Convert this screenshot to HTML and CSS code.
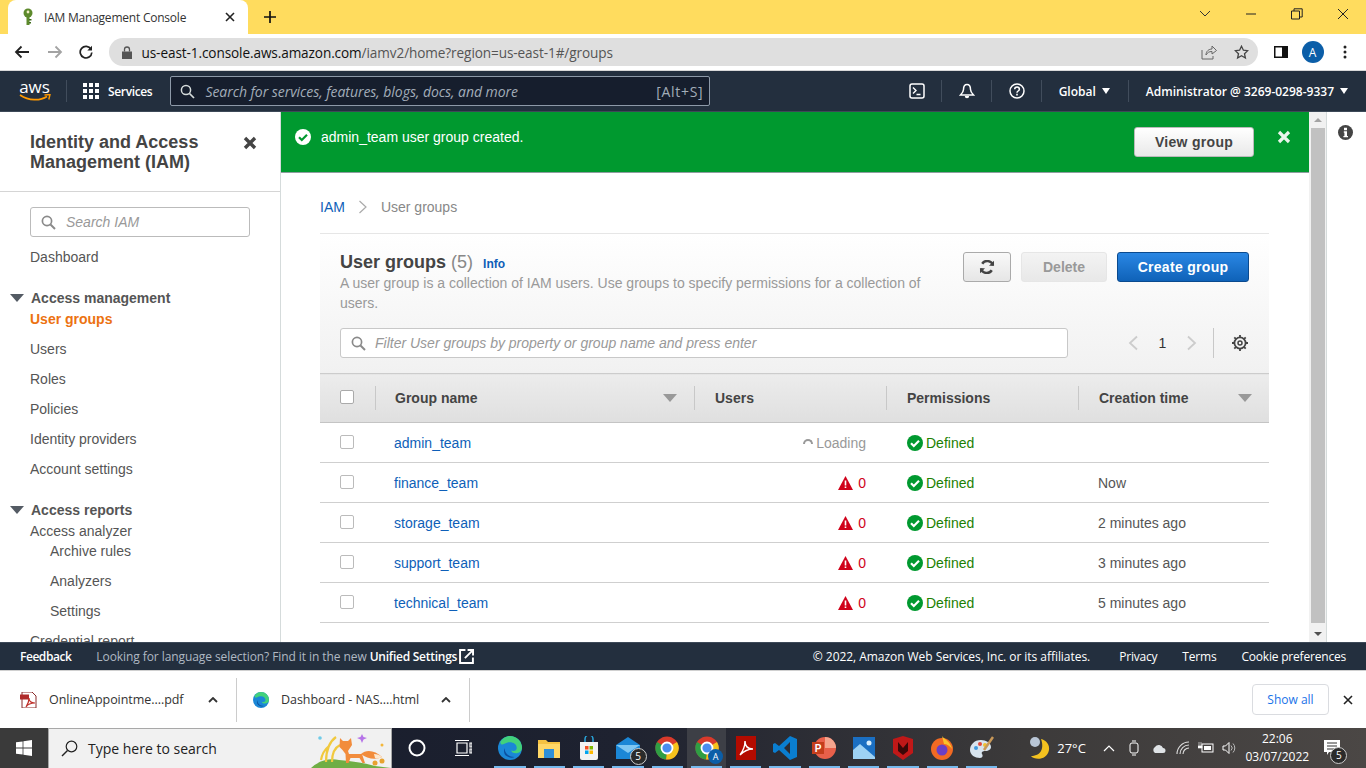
FILE: index.html
```html
<!DOCTYPE html>
<html lang="en">
<head>
  <meta charset="UTF-8">
  <title>IAM Management Console</title>
  <link rel="stylesheet" href="styles.css">
</head>
<body>

  <!-- browser chrome -->
  <div class="tabstrip">
    <div class="tab">
      <svg class="tab-icon" width="16" height="18" viewBox="0 0 16 18"><circle cx="8" cy="5" r="4.5" fill="#5d8a2c"/><circle cx="8" cy="4" r="1.4" fill="#f4f0c8"/><path d="M6.5 8h3v9h-3z" fill="#5d8a2c"/><path d="M9 11h2.5v1.6H9zM9 14h2v1.6H9z" fill="#3f6a1c"/></svg>
      <span class="tab-title">IAM Management Console</span>
      <svg class="tab-close" width="10" height="10" viewBox="0 0 10 10"><path d="M1 1l8 8M9 1l-8 8" stroke="#222" stroke-width="1.6"/></svg>
    </div>
    <svg class="new-tab" width="14" height="14" viewBox="0 0 14 14"><path d="M7 1v12M1 7h12" stroke="#111" stroke-width="1.7"/></svg>
    <div class="window-btns">
      <svg width="12" height="8" viewBox="0 0 12 8"><path d="M1 1l5 5 5-5" fill="none" stroke="#333"/></svg>
      <svg width="12" height="2" viewBox="0 0 12 2"><path d="M1 1h10" stroke="#222"/></svg>
      <svg width="12" height="12" viewBox="0 0 12 12"><path d="M.5 3h8v8h-8zM3 3V.8h8.2V9H8.500" fill="none" stroke="#222"/></svg>
      <svg width="12" height="12" viewBox="0 0 12 12"><path d="M1 1l10 10M11 1L1 11" stroke="#222"/></svg>
    </div>
  </div>

  <div class="toolbar">
    <svg class="tool-btn" width="16" height="14" viewBox="0 0 16 14"><path d="M15 7H2M7.500 1.500L2 7l5.500 5.500" fill="none" stroke="#222" stroke-width="1.800"/></svg>
    <svg class="tool-btn" width="16" height="14" viewBox="0 0 16 14"><path d="M1 7h13M8.500 1.500L14 7l-5.500 5.500" fill="none" stroke="#a3a3a3" stroke-width="1.800"/></svg>
    <svg class="tool-btn" width="14" height="14" viewBox="0 0 14 14"><path d="M12 4.200A5.800 5.800 0 1 0 12.800 7.500" fill="none" stroke="#222" stroke-width="1.700"/><path d="M13 .8v4.700H8.300z" fill="#222"/></svg>
    <div class="omnibox">
      <svg width="10" height="13" viewBox="0 0 10 13"><path d="M0 5.500h10V13H0z" fill="#555"/><path d="M2.500 5.500V3.500a2.500 2.500 0 0 1 5 0v2" fill="none" stroke="#555" stroke-width="1.300"/></svg>
      <span class="url"><span class="url-host">us-east-1.console.aws.amazon.com</span>/iamv2/home?region=us-east-1#/groups</span>
      <svg class="omni-share" width="16" height="15" viewBox="0 0 16 15"><path d="M1 5v9h11v-3M5 10c0-4 3-6 6-6V1l4.500 4.500L11 9V6.500c-3 0-4.500 1-6 3.500z" fill="none" stroke="#666"/></svg>
      <svg class="omni-star" width="15" height="15" viewBox="0 0 15 15"><path d="M7.500 1.200l1.900 4 4.300.5-3.200 3 .9 4.300-3.900-2.200L3.600 13l.9-4.300-3.200-3 4.300-.5z" fill="none" stroke="#444" stroke-width="1.300"/></svg>
    </div>
    <svg class="panel-btn" width="14" height="12" viewBox="0 0 14 12"><path d="M0 0h14v12H0z" fill="#111"/><path d="M1.500 1.500h6.500v9H1.500z" fill="#fff"/></svg>
    <span class="avatar">A</span>
    <svg class="menu-btn" width="4" height="14" viewBox="0 0 4 14"><circle cx="2" cy="2" r="1.500" fill="#222"/><circle cx="2" cy="7" r="1.500" fill="#222"/><circle cx="2" cy="12" r="1.500" fill="#222"/></svg>
  </div>

  <!-- aws console nav -->
  <nav class="aws-nav">
    <div class="aws-logo">
      <span class="aws-word">aws</span>
      <svg width="32" height="8" viewBox="0 0 32 8"><path d="M1 1c9 6 20 6 27 1.500" fill="none" stroke="#f90" stroke-width="1.700"/><path d="M25.500 1l5.500-.5-1.200 5" fill="none" stroke="#f90" stroke-width="1.400"/></svg>
    </div>
    <span class="nav-sep"></span>
    <span class="services-grid"><i></i><i></i><i></i><i></i><i></i><i></i><i></i><i></i><i></i></span>
    <span class="services-label">Services</span>
    <div class="nav-search">
      <svg width="15" height="15" viewBox="0 0 15 15"><circle cx="6" cy="6" r="4.600" fill="none" stroke="#d5dbdb" stroke-width="1.500"/><path d="M9.500 9.500l4.500 4.500" stroke="#d5dbdb" stroke-width="1.700"/></svg>
      <span class="nav-search-text">Search for services, features, blogs, docs, and more</span>
      <span class="nav-search-key">[Alt+S]</span>
    </div>
    <div class="nav-right">
      <svg class="nav-icon" width="16" height="16" viewBox="0 0 16 16"><rect x="1" y="1" width="14" height="14" rx="2" fill="none" stroke="#fff" stroke-width="1.500"/><path d="M4 4.500L7 7.500 4 10.500M7.500 11.500H11.500" fill="none" stroke="#fff" stroke-width="1.400"/></svg>
      <span class="nav-sep"></span>
      <svg class="nav-icon" width="16" height="16" viewBox="0 0 16 16"><path d="M8 1.500c-3 0-3.500 3-3.500 5 0 2-2.500 5-3 5.500h13c-.5-.5-3-3.500-3-5.500 0-2-.5-5-3.500-5z" fill="none" stroke="#fff" stroke-width="1.500"/><path d="M5.800 13a2.200 2.200 0 0 0 4.400 0" fill="#fff"/></svg>
      <span class="nav-sep"></span>
      <svg class="nav-icon" width="16" height="16" viewBox="0 0 16 16"><circle cx="8" cy="8" r="7" fill="none" stroke="#fff" stroke-width="1.500"/><path d="M5.700 6.200c0-3 4.700-3 4.700 0 0 1.800-2.400 1.800-2.400 3.500" fill="none" stroke="#fff" stroke-width="1.500"/><path d="M7.200 10.800h1.600v1.600H7.200z" fill="#fff"/></svg>
      <span class="nav-sep"></span>
      <span class="nav-menu nav-global">Global</span><span class="caret"></span>
      <span class="nav-sep"></span>
      <span class="nav-menu">Administrator @ 3269-0298-9337</span><span class="caret"></span>
    </div>
  </nav>

  <div class="console-body">
    <aside class="sidebar">
      <div class="side-head">
        <h2>Identity and Access Management (IAM)</h2>
        <svg class="side-close" width="14" height="14" viewBox="0 0 14 14"><path d="M2 2l10 10M12 2L2 12" stroke="#444" stroke-width="3.400"/></svg>
      </div>
      <div class="side-search">
        <svg class="search-glass" width="15" height="15" viewBox="0 0 15 15"><circle cx="6" cy="6" r="4.600" fill="none" stroke="#8a8a8a" stroke-width="1.700"/><path d="M9.500 9.500l4.500 4.500" stroke="#8a8a8a" stroke-width="2"/></svg>
        <span>Search IAM</span>
      </div>
      <a class="side-link side-dash">Dashboard</a>
      <div class="side-section"><span class="side-tri"></span>Access management</div>
      <a class="side-link side-active">User groups</a>
      <a class="side-link">Users</a>
      <a class="side-link">Roles</a>
      <a class="side-link">Policies</a>
      <a class="side-link">Identity providers</a>
      <a class="side-link">Account settings</a>
      <div class="side-section"><span class="side-tri"></span>Access reports</div>
      <a class="side-link side-sub-head">Access analyzer</a>
      <a class="side-link side-sub side-sub-first">Archive rules</a>
      <a class="side-link side-sub">Analyzers</a>
      <a class="side-link side-sub">Settings</a>
      <a class="side-link">Credential report</a>
    </aside>

    <main class="content">
      <div class="flash">
        <svg width="16" height="16" viewBox="0 0 16 16"><circle cx="8" cy="8" r="8" fill="#fff"/><path d="M4 8.200l2.800 2.800L12 5.800" fill="none" stroke="#00992f" stroke-width="2.200"/></svg>
        <span class="flash-text">admin_team user group created.</span>
        <button class="btn-view">View group</button>
        <svg class="flash-close" width="14" height="14" viewBox="0 0 14 14"><path d="M2 2l10 10M12 2L2 12" stroke="#e9f5ec" stroke-width="3.200"/></svg>
      </div>

      <div class="crumbs">
        <a class="crumb-link">IAM</a>
        <svg width="10" height="14" viewBox="0 0 10 14"><path d="M1.500 1l6.500 6-6.500 6" fill="none" stroke="#aaa" stroke-width="1.200"/></svg>
        <span>User groups</span>
      </div>

      <section class="panel">
        <div class="panel-head">
          <div class="panel-top">
            <div class="panel-titles">
              <h1>User groups <span class="count">(5)</span> <a class="info">Info</a></h1>
              <p>A user group is a collection of IAM users. Use groups to specify permissions for a collection of users.</p>
            </div>
            <div class="panel-btns">
              <button class="btn btn-refresh"><svg width="16" height="14" viewBox="0 0 16 14"><path d="M14 5.500A6 6 0 0 0 3.200 3.700M2 8.500a6 6 0 0 0 10.800 1.800" fill="none" stroke="#444" stroke-width="2.500"/><path d="M15 .8v5H10zM1 13.200v-5h5z" fill="#444"/></svg></button>
              <button class="btn btn-delete">Delete</button>
              <button class="btn btn-create">Create group</button>
            </div>
          </div>
          <div class="filter-row">
            <div class="filter">
              <svg class="search-glass" width="15" height="15" viewBox="0 0 15 15"><circle cx="6" cy="6" r="4.600" fill="none" stroke="#8a8a8a" stroke-width="1.700"/><path d="M9.500 9.500l4.500 4.500" stroke="#8a8a8a" stroke-width="2"/></svg>
              <span>Filter User groups by property or group name and press enter</span>
            </div>
            <div class="pager">
              <svg width="12" height="16" viewBox="0 0 12 16"><path d="M10 1.500L3 8l7 6.500" fill="none" stroke="#ccc" stroke-width="1.800"/></svg>
              <span class="pager-num">1</span>
              <svg width="12" height="16" viewBox="0 0 12 16"><path d="M2 1.500L9 8l-7 6.500" fill="none" stroke="#ccc" stroke-width="1.800"/></svg>
              <span class="pager-sep"></span>
              <svg class="gear" width="16" height="16" viewBox="0 0 16 16"><circle cx="8" cy="8" r="5.600" fill="none" stroke="#444" stroke-width="1.800"/><circle cx="8" cy="8" r="2" fill="none" stroke="#444" stroke-width="1.500"/><path d="M8 0v2.500M8 13.500V16M0 8h2.500M13.500 8H16M2.300 2.300l1.800 1.800M11.900 11.900l1.800 1.800M2.300 13.700l1.800-1.800M11.900 4.100l1.800-1.800" stroke="#444" stroke-width="1.800"/></svg>
            </div>
          </div>
        </div>

        <table class="groups">
          <thead>
            <tr>
              <th class="col-check"><span class="check check-head"></span></th>
              <th class="col-name"><div class="th-inner">Group name<span class="sort"></span></div></th>
              <th class="col-users"><div class="th-inner">Users</div></th>
              <th class="col-perm"><div class="th-inner">Permissions</div></th>
              <th class="col-time"><div class="th-inner">Creation time<span class="sort"></span></div></th>
            </tr>
          </thead>
          <tbody>
            <tr>
              <td><span class="check"></span></td>
              <td><a class="group-link">admin_team</a></td>
              <td class="users-cell"><span class="spinner"></span><span class="loading">Loading</span></td>
              <td class="perm-cell"><svg class="ok" width="16" height="16" viewBox="0 0 16 16"><circle cx="8" cy="8" r="8" fill="#00992f"/><path d="M4 8.200l2.800 2.800L12 5.800" fill="none" stroke="#fff" stroke-width="2.200"/></svg><span class="defined">Defined</span></td>
              <td></td>
            </tr>
            <tr>
              <td><span class="check"></span></td>
              <td><a class="group-link">finance_team</a></td>
              <td class="users-cell"><svg class="warn" width="15" height="14" viewBox="0 0 15 14"><path d="M7.500 0L15 14H0z" fill="#d0021b"/><path d="M6.700 4.500h1.600v5H6.700zM6.700 10.500h1.600V12H6.700z" fill="#fff"/></svg><span class="zero">0</span></td>
              <td class="perm-cell"><svg class="ok" width="16" height="16" viewBox="0 0 16 16"><circle cx="8" cy="8" r="8" fill="#00992f"/><path d="M4 8.200l2.800 2.800L12 5.800" fill="none" stroke="#fff" stroke-width="2.200"/></svg><span class="defined">Defined</span></td>
              <td>Now</td>
            </tr>
            <tr>
              <td><span class="check"></span></td>
              <td><a class="group-link">storage_team</a></td>
              <td class="users-cell"><svg class="warn" width="15" height="14" viewBox="0 0 15 14"><path d="M7.500 0L15 14H0z" fill="#d0021b"/><path d="M6.700 4.500h1.600v5H6.700zM6.700 10.500h1.600V12H6.700z" fill="#fff"/></svg><span class="zero">0</span></td>
              <td class="perm-cell"><svg class="ok" width="16" height="16" viewBox="0 0 16 16"><circle cx="8" cy="8" r="8" fill="#00992f"/><path d="M4 8.200l2.800 2.800L12 5.800" fill="none" stroke="#fff" stroke-width="2.200"/></svg><span class="defined">Defined</span></td>
              <td>2 minutes ago</td>
            </tr>
            <tr>
              <td><span class="check"></span></td>
              <td><a class="group-link">support_team</a></td>
              <td class="users-cell"><svg class="warn" width="15" height="14" viewBox="0 0 15 14"><path d="M7.500 0L15 14H0z" fill="#d0021b"/><path d="M6.700 4.500h1.600v5H6.700zM6.700 10.500h1.600V12H6.700z" fill="#fff"/></svg><span class="zero">0</span></td>
              <td class="perm-cell"><svg class="ok" width="16" height="16" viewBox="0 0 16 16"><circle cx="8" cy="8" r="8" fill="#00992f"/><path d="M4 8.200l2.800 2.800L12 5.800" fill="none" stroke="#fff" stroke-width="2.200"/></svg><span class="defined">Defined</span></td>
              <td>3 minutes ago</td>
            </tr>
            <tr>
              <td><span class="check"></span></td>
              <td><a class="group-link">technical_team</a></td>
              <td class="users-cell"><svg class="warn" width="15" height="14" viewBox="0 0 15 14"><path d="M7.500 0L15 14H0z" fill="#d0021b"/><path d="M6.700 4.500h1.600v5H6.700zM6.700 10.500h1.600V12H6.700z" fill="#fff"/></svg><span class="zero">0</span></td>
              <td class="perm-cell"><svg class="ok" width="16" height="16" viewBox="0 0 16 16"><circle cx="8" cy="8" r="8" fill="#00992f"/><path d="M4 8.200l2.800 2.800L12 5.800" fill="none" stroke="#fff" stroke-width="2.200"/></svg><span class="defined">Defined</span></td>
              <td>5 minutes ago</td>
            </tr>
          </tbody>
        </table>
      </section>
    </main>

    <div class="scrollbar">
      <span class="scroll-up"></span>
      <span class="scroll-thumb"></span>
      <span class="scroll-down"></span>
    </div>

    <div class="right-rail">
      <svg width="15" height="15" viewBox="0 0 15 15"><circle cx="7.500" cy="7.500" r="7.500" fill="#444"/><path d="M6 2.800h3v2.400H6zM5.800 6.300h3.200v4.600h1v1.400H5.400v-1.400h1V7.700h-.6z" fill="#fff"/></svg>
    </div>
  </div>

  <footer class="aws-footer">
    <span class="foot-feedback">Feedback</span>
    <span class="foot-lang">Looking for language selection? Find it in the new</span>
    <span class="foot-unified">Unified Settings</span>
    <svg width="15" height="15" viewBox="0 0 14 14"><path d="M6 1H1v12h12V8" fill="none" stroke="#fff" stroke-width="1.800"/><path d="M5.500 8.500L13 1M8 .9h5.100V6" fill="none" stroke="#fff" stroke-width="1.800"/></svg>
    <div class="foot-right">
      <span class="foot-copy">© 2022, Amazon Web Services, Inc. or its affiliates.</span>
      <span>Privacy</span>
      <span>Terms</span>
      <span>Cookie preferences</span>
    </div>
  </footer>

  <!-- downloads shelf -->
  <div class="downloads">
    <div class="dl-item dl-pdf">
      <svg width="17" height="16" viewBox="0 0 17 16"><path d="M2 0h10l4 4v12H2z" fill="#fff" stroke="#8a2a2a"/><path d="M0 2.500h9v5H0z" fill="#b02a2a"/><path d="M6 15c2-3 3-7 3-9 0 3 2 5 6 5-3 0-7 1-9 4z" fill="none" stroke="#c0302a" stroke-width="1.200"/></svg>
      <span class="dl-name">OnlineAppointme....pdf</span>
      <svg class="dl-caret" width="10" height="6" viewBox="0 0 10 6"><path d="M1 5l4-4 4 4" fill="none" stroke="#333" stroke-width="1.800"/></svg>
    </div>
    <div class="dl-item dl-html">
      <svg width="16" height="16" viewBox="0 0 16 16"><circle cx="8" cy="8" r="8" fill="#1b87d6"/><path d="M8 0a8 8 0 0 1 8 8c0 2-2 3.500-4 3.500-2 0-3-.8-3.200-1.800 2 .8 3.700 0 3.700-1.700C12.500 5 9 3.500 6 4.500 4 5.200 2 7 1.500 4 3 1.500 5.500 0 8 0z" fill="#42d17b"/><path d="M6 13.500c-2-1-2.500-3.500-1.500-5.500-.3 3 2 6 6.500 6-1.500.8-3.400.5-5-.5z" fill="#0b4f9e"/></svg>
      <span class="dl-name">Dashboard - NAS....html</span>
      <svg class="dl-caret" width="10" height="6" viewBox="0 0 10 6"><path d="M1 5l4-4 4 4" fill="none" stroke="#333" stroke-width="1.800"/></svg>
    </div>
    <div class="dl-right">
      <button class="show-all">Show all</button>
      <svg width="10" height="10" viewBox="0 0 10 10"><path d="M1 1l8 8M9 1L1 9" stroke="#222" stroke-width="1.600"/></svg>
    </div>
  </div>

  <!-- windows taskbar -->
  <div class="taskbar">
    <div class="start">
      <svg width="16" height="16" viewBox="0 0 16 16"><path d="M0 2.300l6.600-.9v6.200H0zM7.400 1.300L16 0v7.600H7.400zM0 8.400h6.600v6.200L0 13.700zM7.400 8.400H16V16l-8.600-1.300z" fill="#fff"/></svg>
    </div>
    <div class="win-search">
      <svg width="17" height="17" viewBox="0 0 17 17"><circle cx="10.500" cy="6.500" r="5.300" fill="none" stroke="#222" stroke-width="1.200"/><path d="M6.500 10.500L1 16" stroke="#222" stroke-width="1.500"/></svg>
      <span class="win-search-text">Type here to search</span>
      <svg class="fox" width="80" height="40" viewBox="0 0 80 40">
        <path d="M0 40Q12 29 28 32Q50 34 64 38L80 40z" fill="#6fae45"/>
        <path d="M15 34C15 22 18 14 25 9M21 34C21 26 23 20 29 17M10 32C11 26 13 22 18 18" fill="none" stroke="#f1c93e" stroke-width="2.200"/>
        <circle cx="9" cy="10" r="1.800" fill="#6fcbe8"/>
        <path d="M29 10l3 3h5l3-3 1 7-4 6 1 3h13l3 9h-2.500l-3-5h-9l-2 5H35l-.5-9-3-4-3-3z" fill="#f28c3c"/>
        <path d="M50 26c5-5 14-4 21 3-6 3-15 2-21-3z" fill="#f28c3c"/>
        <path d="M63 26c3 0 6 1 8 3-2 1-5 2-7 1z" fill="#fde8cf"/>
        <path d="M51 6l1.500 3 3.500 1-3.500 1.500L51 15l-1.500-3.500-3.500-1.500 3.500-1z" fill="#b674e8"/>
        <circle cx="71" cy="17" r="1.500" fill="#f4b73a"/>
        <circle cx="64" cy="35" r="2.500" fill="#e8a22f"/>
        <circle cx="71" cy="33" r="2.500" fill="#e8a22f"/>
      </svg>
    </div>
    <div class="task-apps">
      <span class="task-app task-wide"><svg width="18" height="18" viewBox="0 0 18 18"><circle cx="9" cy="9" r="7.500" fill="none" stroke="#fff" stroke-width="2"/></svg></span>
      <span class="task-app task-wide"><svg width="18" height="16" viewBox="0 0 18 16"><path d="M3 3h10v10H3zM1 .5h14M1 15.500h14M16 3h2v4h-2zM16 9h2v4h-2z" fill="none" stroke="#fff" stroke-width="1.200"/></svg></span>
      <span class="task-app task-first"><svg width="24" height="24" viewBox="0 0 16 16"><circle cx="8" cy="8" r="8" fill="#1b87d6"/><path d="M8 0a8 8 0 0 1 8 8c0 2-2 3.500-4 3.500-2 0-3-.8-3.200-1.800 2 .8 3.700 0 3.700-1.700C12.500 5 9 3.500 6 4.500 4 5.200 2 7 1.500 4 3 1.500 5.500 0 8 0z" fill="#42d17b"/><path d="M6 13.500c-2-1-2.500-3.500-1.500-5.500-.3 3 2 6 6.500 6-1.500.8-3.400.5-5-.5z" fill="#0b4f9e"/></svg><span class="run"></span></span>
      <span class="task-app"><svg width="22" height="20" viewBox="0 0 22 20"><path d="M0 2h8l2 2h12v14H0z" fill="#f5c242"/><path d="M0 6h22v14H0z" fill="#ffd767"/><path d="M6 11h10v9H6z" fill="#2f8fd8"/></svg><span class="run"></span></span>
      <span class="task-app"><svg width="20" height="24" viewBox="0 0 20 24"><path d="M1 6h18v16a2 2 0 0 1-2 2H3a2 2 0 0 1-2-2z" fill="#f2f2f2"/><path d="M6 6V3a4 4 0 0 1 8 0v3" fill="none" stroke="#29a3d8" stroke-width="1.500"/><path d="M6 10h3.500v3.500H6z" fill="#f25022"/><path d="M10.500 10H14v3.500h-3.500z" fill="#7fba00"/><path d="M6 14.500h3.500V18H6z" fill="#00a4ef"/><path d="M10.500 14.500H14V18h-3.500z" fill="#ffb900"/></svg><span class="run"></span></span>
      <span class="task-app"><svg width="24" height="22" viewBox="0 0 24 22"><path d="M0 8L12 0l12 8v14H0z" fill="#1b87d6"/><path d="M0 8l12 8 12-8" fill="#7fc7f2"/></svg><span class="task-badge">5</span><span class="run"></span></span>
      <span class="task-app"><svg width="24" height="24" viewBox="0 0 24 24"><circle cx="12" cy="12" r="11.500" fill="#d93a2b"/><path d="M12 12L22 6A11.500 11.500 0 0 1 11 23.500z" fill="#f6c31c"/><path d="M12 12L11 23.500A11.500 11.500 0 0 1 2 6z" fill="#2f9e44"/><circle cx="12" cy="12" r="5.500" fill="#4a8df0" stroke="#fff" stroke-width="1.800"/></svg><span class="run"></span></span>
      <span class="task-app task-active"><svg width="24" height="24" viewBox="0 0 24 24"><circle cx="12" cy="12" r="11.500" fill="#d93a2b"/><path d="M12 12L22 6A11.500 11.500 0 0 1 11 23.500z" fill="#f6c31c"/><path d="M12 12L11 23.500A11.500 11.500 0 0 1 2 6z" fill="#2f9e44"/><circle cx="12" cy="12" r="5.500" fill="#4a8df0" stroke="#fff" stroke-width="1.800"/></svg><span class="task-profile">A</span><span class="run"></span></span>
      <span class="task-app"><svg width="20" height="24" viewBox="0 0 20 24"><path d="M0 0h20v24H0z" fill="#b30b00"/><path d="M4 19c3-4 5-9 5-14 0 5 3 8 8 8-4 0-9 2-13 6z" fill="none" stroke="#fff" stroke-width="1.400"/></svg><span class="run"></span></span>
      <span class="task-app"><svg width="24" height="24" viewBox="0 0 24 24"><path d="M17 0l7 3v18l-7 3-11-10-4 3-2-1V8l2-1 4 3zM17 6l-6 6 6 6z" fill="#0a7ed0"/></svg><span class="run"></span></span>
      <span class="task-app"><svg width="24" height="24" viewBox="0 0 24 24"><circle cx="13" cy="12" r="11" fill="#e8604a"/><path d="M13 12V1a11 11 0 0 1 11 11z" fill="#f4a58e"/><path d="M0 6h12v12H0z" fill="#c43e1c"/><text x="6" y="16" font-family="Liberation Sans" font-size="10" font-weight="700" fill="#fff" text-anchor="middle">P</text></svg><span class="run"></span></span>
      <span class="task-app"><svg width="22" height="22" viewBox="0 0 22 22"><path d="M0 0h22v22H0z" fill="#1b6fc2"/><path d="M0 22V13l7-6 15 13v2z" fill="#9ed2f4"/><circle cx="16" cy="6" r="2.500" fill="#d9eefc"/></svg><span class="run"></span></span>
      <span class="task-app"><svg width="20" height="24" viewBox="0 0 20 24"><path d="M0 3l10-3 10 3v14l-10 7-10-7z" fill="#c01818"/><path d="M5 6l5 6 5-6v9l-5 4-5-4z" fill="#3a0808"/></svg><span class="run"></span></span>
      <span class="task-app"><svg width="24" height="24" viewBox="0 0 24 24"><circle cx="12" cy="13" r="11" fill="#f26a23"/><path d="M12 0c2 3 9 6 10 13-2-3-5-5-8-5z" fill="#f9c32b"/><circle cx="12" cy="14" r="5.500" fill="#6b3fc4"/></svg><span class="run"></span></span>
      <span class="task-app"><svg width="24" height="24" viewBox="0 0 24 24"><path d="M11 4C4 4 0 9 0 14s5 8 10 8c3 0 3-3 2-4-1-2 1-3 3-3 4 0 6-2 6-4 0-4-5-7-10-7z" fill="#d8e4ee"/><circle cx="6" cy="12" r="2" fill="#3f9be0"/><circle cx="10" cy="8" r="2" fill="#e0483c"/><circle cx="15" cy="9" r="2" fill="#f0c030"/><path d="M14 14L23 1" stroke="#c89858" stroke-width="2.500"/></svg><span class="run"></span></span>
    </div>
    <div class="tray">
      <svg class="tray-weather" width="24" height="26" viewBox="0 0 24 26"><path d="M15 4c3 8 1 17-10 17 3 4 16 5 18-6 1-5-3-10-8-11z" fill="#f4c21f"/><circle cx="9" cy="7" r="5" fill="#b9c6d6"/></svg>
      <span class="tray-temp">27°C</span>
      <svg class="tray-up" width="12" height="7" viewBox="0 0 12 7"><path d="M1 6l5-5 5 5" fill="none" stroke="#fff" stroke-width="1.200"/></svg>
      <svg class="tray-meet" width="12" height="16" viewBox="0 0 12 16"><rect x="2" y="3" width="8" height="10" rx="2" fill="none" stroke="#fff"/><path d="M4 1h4M4 15h4" stroke="#fff"/></svg>
      <svg class="tray-cloud" width="16" height="10" viewBox="0 0 16 10"><path d="M4 10a3.500 3.500 0 0 1 0-6 4.500 4.500 0 0 1 8 1 2.500 2.500 0 0 1 0 5z" fill="#dfe3e6"/></svg>
      <svg class="tray-wifi" width="14" height="14" viewBox="0 0 14 14"><path d="M1 13A12 12 0 0 1 13 1M4 13a9 9 0 0 1 9-9M7 13a6 6 0 0 1 6-6" fill="none" stroke="#ddd" stroke-width="1.100"/></svg>
      <svg class="tray-batt" width="16" height="14" viewBox="0 0 16 14"><rect x="4" y="3" width="11" height="8" fill="none" stroke="#fff"/><rect x="6" y="5" width="7" height="4" fill="#fff"/><path d="M1 1v4M3 1v4M0 5h4v2H0z" fill="#fff" stroke="#fff" stroke-width=".6"/></svg>
      <svg class="tray-vol" width="15" height="14" viewBox="0 0 15 14"><path d="M1 5h2.500L7 1.500v11L3.500 9H1z" fill="none" stroke="#fff"/><path d="M9 4.500a3.500 3.500 0 0 1 0 5M11 2.500a6.500 6.500 0 0 1 0 9" fill="none" stroke="#bbb"/></svg>
      <div class="clock"><span>22:06</span><span>03/07/2022</span></div>
      <span class="notify">
        <svg width="16" height="16" viewBox="0 0 16 16"><path d="M0 0h16v12H5l-2 3v-3H0z" fill="#fff"/><path d="M3 3h10M3 6h10M3 9h7" stroke="#333"/></svg>
        <span class="task-badge notify-badge">5</span>
      </span>
    </div>
  </div>

</body>
</html>
```

FILE: styles.css
```css
* {
  box-sizing: border-box;
}

html, body {
  height: 100%;
}

body {
  margin: 0;
  width: 1366px;
  height: 768px;
  overflow: hidden;
  display: flex;
  flex-direction: column;
  font-family: "Liberation Sans", Arial, sans-serif;
  font-size: 14px;
  color: #444;
  background: #fff;
}

svg {
  display: block;
  flex-shrink: 0;
}

/* browser chrome */
.tabstrip {
  height: 34px;
  flex-shrink: 0;
  background: #ffdc5e;
  display: flex;
  align-items: flex-end;
  padding-left: 8px;
}

.tab {
  width: 240px;
  height: 34px;
  background: #fff;
  border-radius: 8px 8px 0 0;
  display: flex;
  align-items: center;
  padding: 0 13px 0 12px;
}

.tab-icon {
  margin-right: 8px;
}

.tab-title {
  font-family: "Open Sans", sans-serif;
  font-size: 12px;
  letter-spacing: -0.22px;
  color: #333;
  flex: 1;
  white-space: nowrap;
}

.new-tab {
  margin: 0 0 10px 15px;
}

.window-btns {
  margin-left: auto;
  align-self: stretch;
  display: flex;
  align-items: center;
}

.window-btns svg {
  margin: 0 0 6px 34px;
}

.window-btns svg:last-child {
  margin-right: 17px;
}

.toolbar {
  height: 37px;
  flex-shrink: 0;
  background: #fff;
  display: flex;
  align-items: center;
  padding: 0 0 0 14px;
  border-bottom: 1px solid #d8d8d8;
}

.tool-btn {
  margin-right: 16.5px;
}

.omnibox {
  width: 1149px;
  height: 28px;
  margin-left: -1px;
  background: #dfdfdf;
  border-radius: 14px;
  display: flex;
  align-items: center;
  padding: 0 9px 0 13px;
}

.url {
  margin-left: 10px;
  font-family: "Open Sans", sans-serif;
  font-size: 13.6px;
  color: #555;
  white-space: nowrap;
  letter-spacing: -0.1px;
}

.url-host {
  color: #111;
}

.omni-share {
  margin-left: auto;
}

.omni-star {
  margin-left: 17px;
}

.panel-btn {
  margin-left: 16px;
}

.avatar {
  width: 22px;
  height: 22px;
  margin-left: 14px;
  border-radius: 50%;
  background: #0b5ea8;
  color: #fff;
  font-family: "Open Sans", sans-serif;
  font-size: 12px;
  display: flex;
  align-items: center;
  justify-content: center;
}

.menu-btn {
  margin-left: 19px;
}

/* aws nav */
.aws-nav {
  height: 40px;
  flex-shrink: 0;
  background: #232f3e;
  display: flex;
  align-items: center;
  padding-left: 18px;
  color: #fff;
}

.aws-logo {
  width: 33px;
  display: flex;
  flex-direction: column;
  align-items: center;
  margin-right: 15px;
}

.aws-word {
  font-family: "Open Sans", sans-serif;
  font-size: 17px;
  line-height: 14px;
  color: #fff;
}

.nav-sep {
  width: 1px;
  height: 22px;
  background: #414d5c;
  flex-shrink: 0;
}

.services-grid {
  display: grid;
  grid-template-columns: repeat(3, 4px);
  grid-auto-rows: 4px;
  gap: 2px;
  margin-left: 16px;
}

.services-grid i {
  background: #fff;
}

.services-label {
  margin-left: 9px;
  font-family: "Open Sans", sans-serif;
  font-size: 12px;
  font-weight: 600;
  letter-spacing: -0.35px;
}

.nav-search {
  width: 540px;
  height: 30px;
  margin-left: 18px;
  background: #161e2d;
  border: 1px solid #8d99a8;
  border-radius: 2px;
  display: flex;
  align-items: center;
  padding: 0 6px 0 9px;
}

.nav-search-text {
  margin-left: 10px;
  font-family: "Open Sans", sans-serif;
  font-size: 14px;
  letter-spacing: -0.05px;
  font-style: italic;
  color: #a2adb9;
  white-space: nowrap;
}

.nav-search-key {
  margin-left: auto;
  font-family: "Open Sans", sans-serif;
  font-size: 14px;
  letter-spacing: 0.7px;
  color: #a2adb9;
}

.nav-right {
  margin-left: auto;
  display: flex;
  align-items: center;
  padding-right: 18px;
}

.nav-icon {
  margin: 0 16px 0 17px;
}

.nav-menu {
  font-family: "Open Sans", sans-serif;
  font-size: 12px;
  font-weight: 600;
  margin-left: 17px;
  white-space: nowrap;
}

.caret {
  width: 0;
  height: 0;
  margin-left: 6px;
  border-left: 4px solid transparent;
  border-right: 4px solid transparent;
  border-top: 6px solid #fff;
}

.nav-global + .caret {
  margin-right: 18px;
}

/* body */
.console-body {
  height: 531px;
  flex-shrink: 0;
  display: flex;
  overflow: hidden;
  border-top: 1px solid #3d4958;
}

.sidebar {
  width: 281px;
  flex-shrink: 0;
  border-right: 1px solid #d5dbdb;
  overflow: hidden;
}

.side-head {
  height: 80px;
  padding: 20px 23px 0 30px;
  border-bottom: 1px solid #d5d5d5;
  display: flex;
  justify-content: space-between;
}

.side-head h2 {
  margin: 0;
  width: 200px;
  font-size: 18px;
  line-height: 20px;
  font-weight: 700;
  color: #444;
}

.side-close {
  margin-top: 4px;
}

.side-search {
  width: 220px;
  height: 30px;
  margin: 15px 0 0 30px;
  border: 1px solid #bbb;
  border-radius: 3px;
  display: flex;
  align-items: center;
  padding-left: 10px;
  gap: 10px;
  font-style: italic;
  color: #999;
}

.side-link {
  display: block;
  height: 30px;
  line-height: 30px;
  padding-left: 30px;
  color: #555;
  white-space: nowrap;
}

.side-dash {
  margin-top: 5px;
}

.side-section {
  height: 20px;
  line-height: 20px;
  margin-top: 16px;
  padding-left: 31px;
  position: relative;
  font-weight: 700;
  color: #555;
  display: flex;
  align-items: center;
}

.side-tri {
  position: absolute;
  left: 10px;
  top: 6px;
  width: 0;
  height: 0;
  border-left: 7px solid transparent;
  border-right: 7px solid transparent;
  border-top: 8px solid #545b64;
}

.side-active {
  height: 22px;
  line-height: 22px;
  margin-bottom: 4px;
  font-weight: 700;
  color: #ec7211;
}

.side-sub-head {
  height: 21px;
  line-height: 22px;
}

.side-sub {
  padding-left: 50px;
}

.side-sub-first {
  height: 20px;
  line-height: 20px;
  margin-bottom: 5px;
}

/* content */
.content {
  width: 1028px;
  flex-shrink: 0;
  overflow: hidden;
}

.flash {
  height: 61px;
  background: #00992f;
  border-bottom: 1px solid #8f9da0;
  display: flex;
  align-items: flex-start;
  padding: 17px 18px 0 14px;
  color: #fff;
}

.flash-text {
  margin-left: 10px;
  line-height: 16px;
}

.btn-view {
  margin: -2px 0 0 auto;
  width: 120px;
  height: 30px;
  border: 1px solid #bbb;
  border-radius: 3px;
  background: linear-gradient(#fff, #e9e9e9);
  font-family: "Liberation Sans", sans-serif;
  font-size: 14px;
  font-weight: 700;
  letter-spacing: 0.3px;
  color: #444;
}

.flash-close {
  margin: 1px 0 0 23px;
}

.crumbs {
  height: 60px;
  padding: 8px 0 0 39px;
  display: flex;
  align-items: center;
  gap: 13px;
  color: #888;
}

.crumb-link {
  color: #0e5fb8;
}

.panel {
  width: 949px;
  margin-left: 39px;
}

.panel-head {
  height: 140px;
  padding: 0 20px;
  border-top: 1px solid #e6e6e6;
  background: linear-gradient(#fff, #f1f1f1);
}

.panel-top {
  height: 80px;
  padding-top: 18px;
  display: flex;
  justify-content: space-between;
}

.panel-titles {
  width: 600px;
}

.panel-titles h1 {
  margin: 0;
  font-size: 18px;
  line-height: 20px;
  font-weight: 700;
  color: #444;
}

.count {
  font-weight: 400;
  color: #888;
}

.info {
  margin-left: 5px;
  font-size: 12px;
  color: #0e5fb8;
}

.panel-titles p {
  margin: -1px 0 0;
  line-height: 20px;
  color: #999;
}

.panel-btns {
  display: flex;
  gap: 10px;
}

.btn {
  height: 30px;
  border-radius: 3px;
  font-family: "Liberation Sans", sans-serif;
  font-size: 14px;
  font-weight: 700;
  display: flex;
  align-items: center;
  justify-content: center;
}

.btn-refresh {
  width: 48px;
  border: 1px solid #aaa;
  background: linear-gradient(#f9f9f9, #e6e6e6);
}

.btn-delete {
  width: 86px;
  border: 1px solid #e6e6e6;
  background: linear-gradient(#f3f3f3, #e8e8e8);
  color: #999;
}

.btn-create {
  width: 132px;
  border: 1px solid #0a4a8f;
  background: linear-gradient(#2a87e4, #0f62b8);
  color: #fff;
  letter-spacing: 0.3px;
}

.filter-row {
  display: flex;
  align-items: center;
  height: 30px;
  margin-top: 14px;
}

.filter {
  width: 728px;
  height: 30px;
  background: #fff;
  border: 1px solid #c8c8c8;
  border-radius: 3px;
  display: flex;
  align-items: center;
  padding-left: 10px;
  gap: 9px;
  font-style: italic;
  color: #999;
}

.pager {
  flex: 1;
  height: 30px;
  display: flex;
  align-items: center;
  padding-left: 59px;
}

.pager-num {
  width: 47px;
  text-align: center;
  color: #333;
  font-size: 14px;
}

.pager-sep {
  width: 1px;
  height: 30px;
  margin-left: 15px;
  background: #c8c8c8;
}

.gear {
  margin-left: 18px;
}

.groups {
  width: 949px;
  border-collapse: collapse;
  table-layout: fixed;
}

.groups th {
  height: 49px;
  padding: 0;
  background: linear-gradient(#ececec, #dfdfdf);
  border-top: 1px solid #ccc;
  border-bottom: 1px solid #c4c4c4;
  text-align: left;
  font-weight: 700;
  color: #444;
}

.col-check {
  width: 55px;
}

.col-name {
  width: 319px;
}

.col-users,
.col-perm {
  width: 192px;
}

.col-time {
  width: 191px;
}

.th-inner {
  height: 24px;
  padding: 0 17px 0 20px;
  border-left: 1px solid #c8c8c8;
  display: flex;
  align-items: center;
  justify-content: space-between;
}

.col-name .th-inner {
  padding-left: 19px;
}

.sort {
  width: 0;
  height: 0;
  border-left: 7.5px solid transparent;
  border-right: 7.5px solid transparent;
  border-top: 8px solid #999;
}

.groups td {
  height: 40px;
  padding: 0;
  border-bottom: 1px solid #cfcfcf;
  color: #555;
  white-space: nowrap;
}

.groups td:nth-child(2) {
  padding-left: 19px;
}

.groups td:nth-child(5) {
  padding-left: 20px;
}

.groups .perm-cell {
  padding-left: 21px;
}

.check {
  display: block;
  width: 14px;
  height: 14px;
  margin: 0 0 2px 20px;
  background: #fff;
  border: 1px solid #bbb;
  border-radius: 2px;
}

.check-head {
  border-color: #aaa;
}

.group-link {
  color: #0e5fb8;
}

.groups .users-cell {
  text-align: right;
  padding-right: 20px;
}

.spinner {
  display: inline-block;
  width: 10px;
  height: 5px;
  margin-right: 3px;
  vertical-align: 4px;
  border: 2px solid #999;
  border-bottom: none;
  border-radius: 6px 6px 0 0;
}

.loading {
  color: #999;
}

.warn {
  display: inline-block;
  vertical-align: -2px;
  margin-right: 5px;
}

.zero {
  color: #d0021b;
}

.ok {
  display: inline-block;
  vertical-align: -3px;
  margin-right: 3px;
}

.defined {
  color: #1d8102;
}

/* scrollbar and right rail */
.scrollbar {
  width: 17px;
  flex-shrink: 0;
  background: #f1f1f1;
  display: flex;
  flex-direction: column;
  align-items: center;
}

.scroll-up,
.scroll-down {
  width: 0;
  height: 0;
  border-left: 4px solid transparent;
  border-right: 4px solid transparent;
}

.scroll-up {
  margin: 6px 0;
  border-bottom: 4px solid #a3a3a3;
}

.scroll-down {
  margin: auto 0 6px;
  border-top: 4px solid #505050;
}

.scroll-thumb {
  width: 14px;
  height: 495px;
  background: #c1c1c1;
}

.right-rail {
  flex: 1;
  border-left: 1px solid #d5dbdb;
  padding: 13px 0 0 11px;
}

/* footer */
.aws-footer {
  height: 29px;
  flex-shrink: 0;
  background: #232f3e;
  border-top: 1px solid #3d4958;
  border-bottom: 1px solid #d0d0d0;
  display: flex;
  align-items: center;
  padding: 0 20px;
  font-family: "Open Sans", sans-serif;
  font-size: 12px;
  color: #fff;
}

.foot-feedback {
  font-weight: 600;
  letter-spacing: -0.45px;
  margin-right: 25px;
}

.foot-lang {
  color: #b0b9c3;
  letter-spacing: -0.08px;
  margin-right: 3px;
}

.foot-unified {
  font-weight: 600;
  letter-spacing: -0.25px;
  margin-right: 2px;
}

.foot-right {
  margin-left: auto;
  display: flex;
  gap: 25px;
  letter-spacing: -0.2px;
}

.foot-copy {
  margin-right: 4px;
  letter-spacing: -0.05px;
}

/* downloads */
.downloads {
  height: 57px;
  flex-shrink: 0;
  background: #fff;
  display: flex;
  align-items: center;
}

.dl-item {
  height: 44px;
  border-right: 1px solid #ccc;
  display: flex;
  align-items: center;
}

.dl-pdf {
  width: 237px;
  padding: 0 18px 0 20px;
}

.dl-html {
  width: 233px;
  padding: 0 18px 0 16px;
}

.dl-name {
  margin-left: 12px;
  flex: 1;
  font-family: "Open Sans", sans-serif;
  font-size: 12.5px;
  letter-spacing: -0.05px;
  color: #333;
  white-space: nowrap;
}

.dl-right {
  margin-left: auto;
  display: flex;
  align-items: center;
  padding-right: 13px;
  gap: 14px;
}

.show-all {
  width: 77px;
  height: 31px;
  background: #fff;
  border: 1px solid #dadce0;
  border-radius: 4px;
  font-family: "Open Sans", sans-serif;
  font-size: 12px;
  color: #1a73e8;
}

/* taskbar */
.taskbar {
  height: 40px;
  flex-shrink: 0;
  background: linear-gradient(90deg, #14192a 0, #1e2230 45%, #3c3a3a 75%, #4b4745 100%);
  display: flex;
  align-items: center;
  color: #fff;
}

.start {
  width: 48px;
  height: 40px;
  background: #3a3a3a;
  display: flex;
  align-items: center;
  justify-content: center;
}

.win-search {
  width: 344px;
  height: 40px;
  background: #f1f1f1;
  border: 1px solid #a8a8a8;
  border-bottom: none;
  display: flex;
  align-items: center;
  padding-left: 12px;
  overflow: hidden;
}

.win-search-text {
  margin-left: 10px;
  font-family: "Open Sans", sans-serif;
  font-size: 14px;
  color: #222;
  white-space: nowrap;
}

.fox {
  margin-left: auto;
  align-self: flex-end;
}

.task-apps {
  display: flex;
  align-items: center;
  margin-left: 2px;
}

.task-app {
  position: relative;
  width: 39.3px;
  height: 40px;
  display: flex;
  align-items: center;
  justify-content: center;
}

.task-wide {
  width: 46px;
}

.task-first {
  margin-left: 4.4px;
}

.task-active {
  background: #3d3f46;
}

.run {
  position: absolute;
  left: 4px;
  right: 4px;
  bottom: 0;
  height: 2px;
  background: #76b9ed;
}

.task-badge {
  position: absolute;
  right: 1px;
  bottom: 3px;
  width: 17px;
  height: 17px;
  border-radius: 50%;
  border: 1px solid #ccc;
  background: #2b2b2b;
  color: #fff;
  font-family: "Open Sans", sans-serif;
  font-size: 10px;
  line-height: 15px;
  text-align: center;
}

.task-profile {
  position: absolute;
  right: 3px;
  bottom: 4px;
  width: 15px;
  height: 15px;
  border-radius: 50%;
  background: #0b5ea8;
  font-family: "Open Sans", sans-serif;
  font-size: 9px;
  line-height: 15px;
  text-align: center;
}

.tray {
  flex: 1;
  display: flex;
  align-items: center;
}

.tray-weather {
  margin-left: 25px;
}

.tray-temp {
  margin-left: 7px;
  width: 29px;
  font-family: "Open Sans", sans-serif;
  font-size: 13px;
  white-space: nowrap;
}

.tray-up {
  margin-left: 17px;
}

.tray-meet {
  margin-left: 13px;
}

.tray-cloud {
  margin-left: 11px;
}

.tray-wifi {
  margin-left: 9px;
}

.tray-batt,
.tray-vol {
  margin-left: 8px;
}

.clock {
  width: 60px;
  display: flex;
  flex-direction: column;
  align-items: center;
  margin-left: 10px;
  font-family: "Open Sans", sans-serif;
  font-size: 12px;
  line-height: 18px;
  white-space: nowrap;
}

.notify {
  position: relative;
  margin-left: 17px;
}

.notify-badge {
  right: -7px;
  bottom: -8px;
}
```
